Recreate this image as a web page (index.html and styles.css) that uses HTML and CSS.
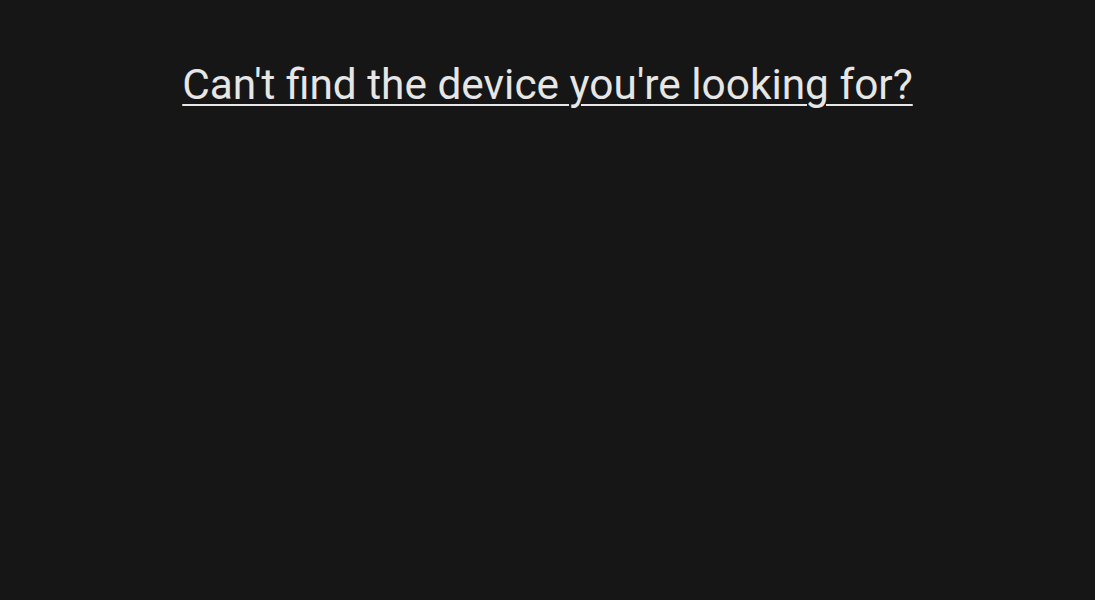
FILE: index.html
```html
<!DOCTYPE html>
<html lang="en">
<head>
    <meta charset="UTF-8">
    <meta name="viewport" content="width=device-width, initial-scale=1.0">
    <title>Find device</title>
    <link rel="stylesheet" href="styles.css">
</head>
<body>
    <div class="help-container">
        <a href="#" class="help-link">Can't find the device you're looking for?</a>
    </div>
</body>
</html>
```

FILE: styles.css
```css
* {
    box-sizing: border-box;
    font-family: Roboto, 'Noto Sans', sans-serif;
}

body {
    margin: 0;
    padding: 0;
    background-color: #161616;
    height: 100vh;
}

.help-container {
    padding-top: 60px;
    text-align: center;
}

.help-link {
    color: #e6e6e6;
    font-size: 42.4px;
    text-decoration: underline;
    text-decoration-thickness: 2px;
    text-underline-offset: 5px;
}
```
